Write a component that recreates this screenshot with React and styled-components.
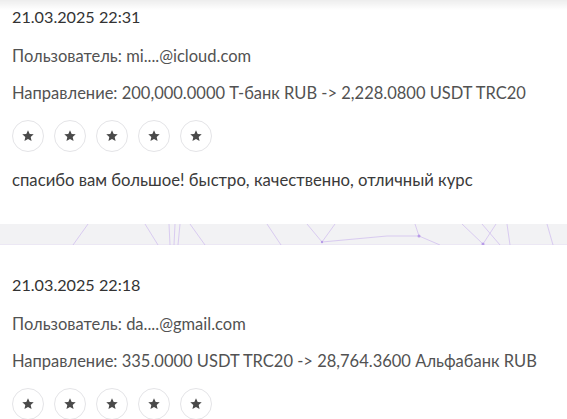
import React from 'react'
import styled, { createGlobalStyle } from 'styled-components'

const GlobalStyle = createGlobalStyle`
  html, body {
    margin: 0;
    padding: 0;
    background: #ffffff;
    overflow: hidden;
  }
  body {
    font-family: Lato, "Open Sans", sans-serif;
    -webkit-font-smoothing: antialiased;
  }
`

const reviews = [
  {
    date: '21.03.2025 22:31',
    user: 'mi....@icloud.com',
    direction: '200,000.0000 Т-банк RUB -> 2,228.0800 USDT TRC20',
    rating: 5,
    comment: 'спасибо вам большое! быстро, качественно, отличный курс',
  },
  {
    date: '21.03.2025 22:18',
    user: 'da....@gmail.com',
    direction: '335.0000 USDT TRC20 -> 28,764.3600 Альфабанк RUB',
    rating: 5,
    comment: '',
  },
]

// Lines of the network pattern that shows between cards
const netLines = [
  [88, 0, 73, 21],
  [145, 0, 158, 21],
  [169, 0, 170, 21],
  [175, 0, 174, 21],
  [180, 0, 178, 21],
  [190, 0, 205, 21],
  [267, 0, 281, 21],
  [307, 0, 322, 18],
  [322, 18, 387, 12],
  [335, 0, 322, 18],
  [387, 12, 419, 12],
  [415, 0, 419, 12],
  [419, 12, 440, 21],
  [462, 0, 483, 20],
  [483, 20, 496, 0],
  [482, 0, 500, 21],
  [507, 0, 510, 21],
  [547, 0, 553, 21],
]

const Page = styled.div`
  position: relative;
  width: 567px;
  height: 419px;
  overflow: hidden;
`

const TopShade = styled.div`
  position: absolute;
  left: 0;
  right: 0;
  top: 0;
  height: 10px;
  background: linear-gradient(rgba(0, 0, 0, 0.07), rgba(0, 0, 0, 0));
  pointer-events: none;
`

const List = styled.div`
  display: flex;
  flex-direction: column;
  margin-top: -23px;
`

const Card = styled.div`
  background: #ffffff;
  padding: 30px 12px 33px;
  display: flex;
  flex-direction: column;
`

const DateLine = styled.div`
  font-size: 16.2px;
  line-height: 20px;
  color: #333333;
`

const Meta = styled.div`
  font-size: 16.5px;
  line-height: 20px;
  color: #525252;
  margin-top: ${(p) => p.$gap}px;
  white-space: nowrap;
`

const Stars = styled.div`
  display: flex;
  gap: 10px;
  margin-top: 17px;
`

const StarBubble = styled.div`
  width: 30px;
  height: 30px;
  border: 1px solid #e4e4e7;
  border-radius: 50%;
  display: flex;
  align-items: center;
  justify-content: center;
  background: #fff;
`

const Comment = styled.div`
  font-size: 16.7px;
  line-height: 22px;
  color: #3a3a3a;
  margin-top: 17px;
  white-space: nowrap;
`

const Divider = styled.div`
  height: 21px;
  background: #f2f2f4;
  border-bottom: 1px solid #ece8f4;
  box-sizing: border-box;
  svg {
    display: block;
  }
`

const Star = () => (
  <svg width="14" height="14" viewBox="0 0 24 24">
    <path
      fill="#4a4a4a"
      d="M12 2.2l2.9 6.3 6.9.7-5.2 4.6 1.5 6.8L12 17.1l-6.1 3.5 1.5-6.8-5.2-4.6 6.9-.7z"
    />
  </svg>
)

const Network = () => (
  <svg width="567" height="21" viewBox="0 0 567 21">
    {netLines.map(([x1, y1, x2, y2], i) => (
      <line key={i} x1={x1} y1={y1} x2={x2} y2={y2} stroke="#c9b2ef" strokeWidth="1" opacity="0.6" />
    ))}
    <circle cx="419" cy="12" r="1.5" fill="#b89be8" />
    <circle cx="483" cy="20" r="1.5" fill="#b89be8" />
    <circle cx="322" cy="18" r="1.2" fill="#b89be8" />
  </svg>
)

const Review = ({ date, user, direction, rating, comment }) => (
  <Card>
    <DateLine>{date}</DateLine>
    <Meta $gap={19}>Пользователь: {user}</Meta>
    <Meta $gap={17}>Направление: {direction}</Meta>
    <Stars>
      {Array.from({ length: rating }).map((_, i) => (
        <StarBubble key={i}>
          <Star />
        </StarBubble>
      ))}
    </Stars>
    {comment && <Comment>{comment}</Comment>}
  </Card>
)

const App = () => (
  <>
    <GlobalStyle />
    <Page>
      <List>
        <Review {...reviews[0]} />
        <Divider>
          <Network />
        </Divider>
        <Review {...reviews[1]} />
      </List>
      <TopShade />
    </Page>
  </>
)

export default App
